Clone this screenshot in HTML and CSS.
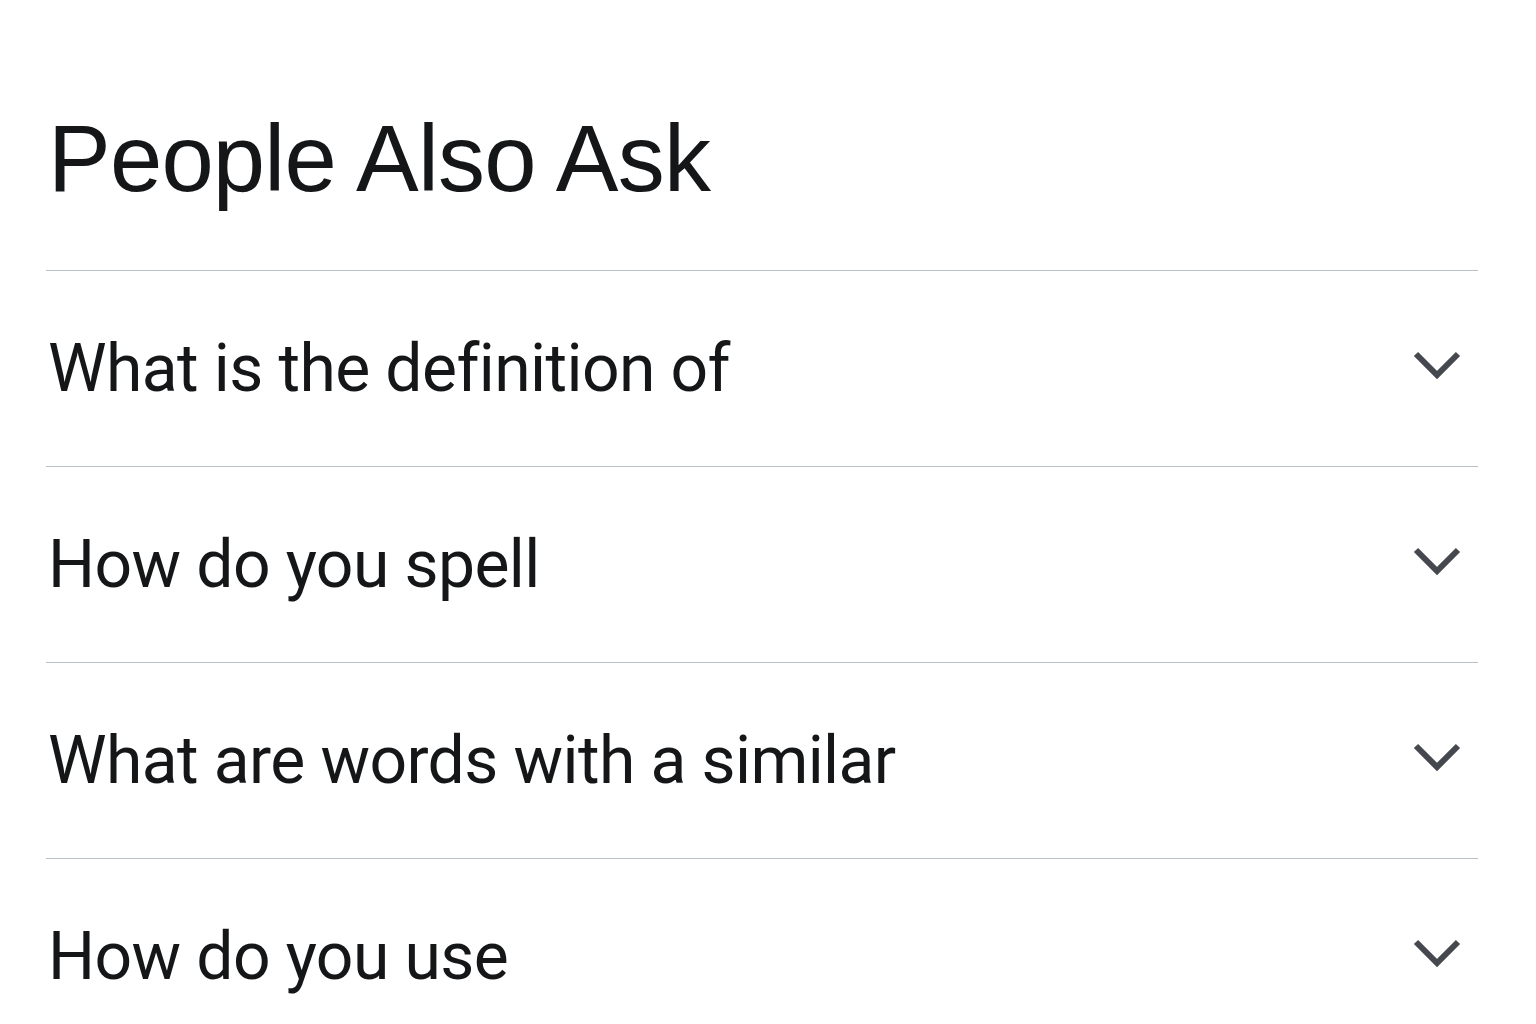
FILE: index.html
```html
<!DOCTYPE html>
<html lang="en">
<head>
<meta charset="utf-8">
<title>People Also Ask</title>
<link rel="stylesheet" href="styles.css">
</head>
<body>
<main class="paa">
  <h1 class="paa-title">People Also Ask</h1>
  <ul class="paa-list">
    <li class="paa-item"><span class="paa-q">What is the definition of</span><svg class="chev" viewBox="0 0 48 30"><path d="M3 4 L24 25 L45 4"/></svg></li>
    <li class="paa-item"><span class="paa-q">How do you spell</span><svg class="chev" viewBox="0 0 48 30"><path d="M3 4 L24 25 L45 4"/></svg></li>
    <li class="paa-item"><span class="paa-q">What are words with a similar</span><svg class="chev" viewBox="0 0 48 30"><path d="M3 4 L24 25 L45 4"/></svg></li>
    <li class="paa-item"><span class="paa-q">How do you use</span><svg class="chev" viewBox="0 0 48 30"><path d="M3 4 L24 25 L45 4"/></svg></li>
  </ul>
</main>
</body>
</html>
```
FILE: styles.css
```css
html, body {
  margin: 0;
  padding: 0;
  background: #ffffff;
}
body {
  height: 1024px;
  overflow: hidden;
}
.paa {
  padding: 0 58px 0 46px;
}
.paa-title {
  margin: 112px 0 0 2px;
  font-family: "Liberation Sans", Arial, sans-serif;
  font-weight: 400;
  font-size: 94px;
  line-height: 94px;
  letter-spacing: -0.8px;
  color: #141618;
  height: 158px;
}
.paa-list {
  list-style: none;
  margin: 0;
  padding: 0;
}
.paa-item {
  height: 195px;
  border-top: 1px solid #b7c0c9;
  display: flex;
  align-items: center;
  justify-content: space-between;
}
.paa-q {
  margin-left: 2px;
  font-family: Roboto, "Liberation Sans", sans-serif;
  font-size: 66px;
  color: #141618;
  letter-spacing: -0.6px;
  padding-top: 0;
}
.chev {
  width: 48px;
  height: 30px;
  margin-right: 17px;
  margin-top: -8px;
}
.chev path {
  fill: none;
  stroke: #45494f;
  stroke-width: 6;
  stroke-linecap: butt;
  stroke-linejoin: miter;
}
```
